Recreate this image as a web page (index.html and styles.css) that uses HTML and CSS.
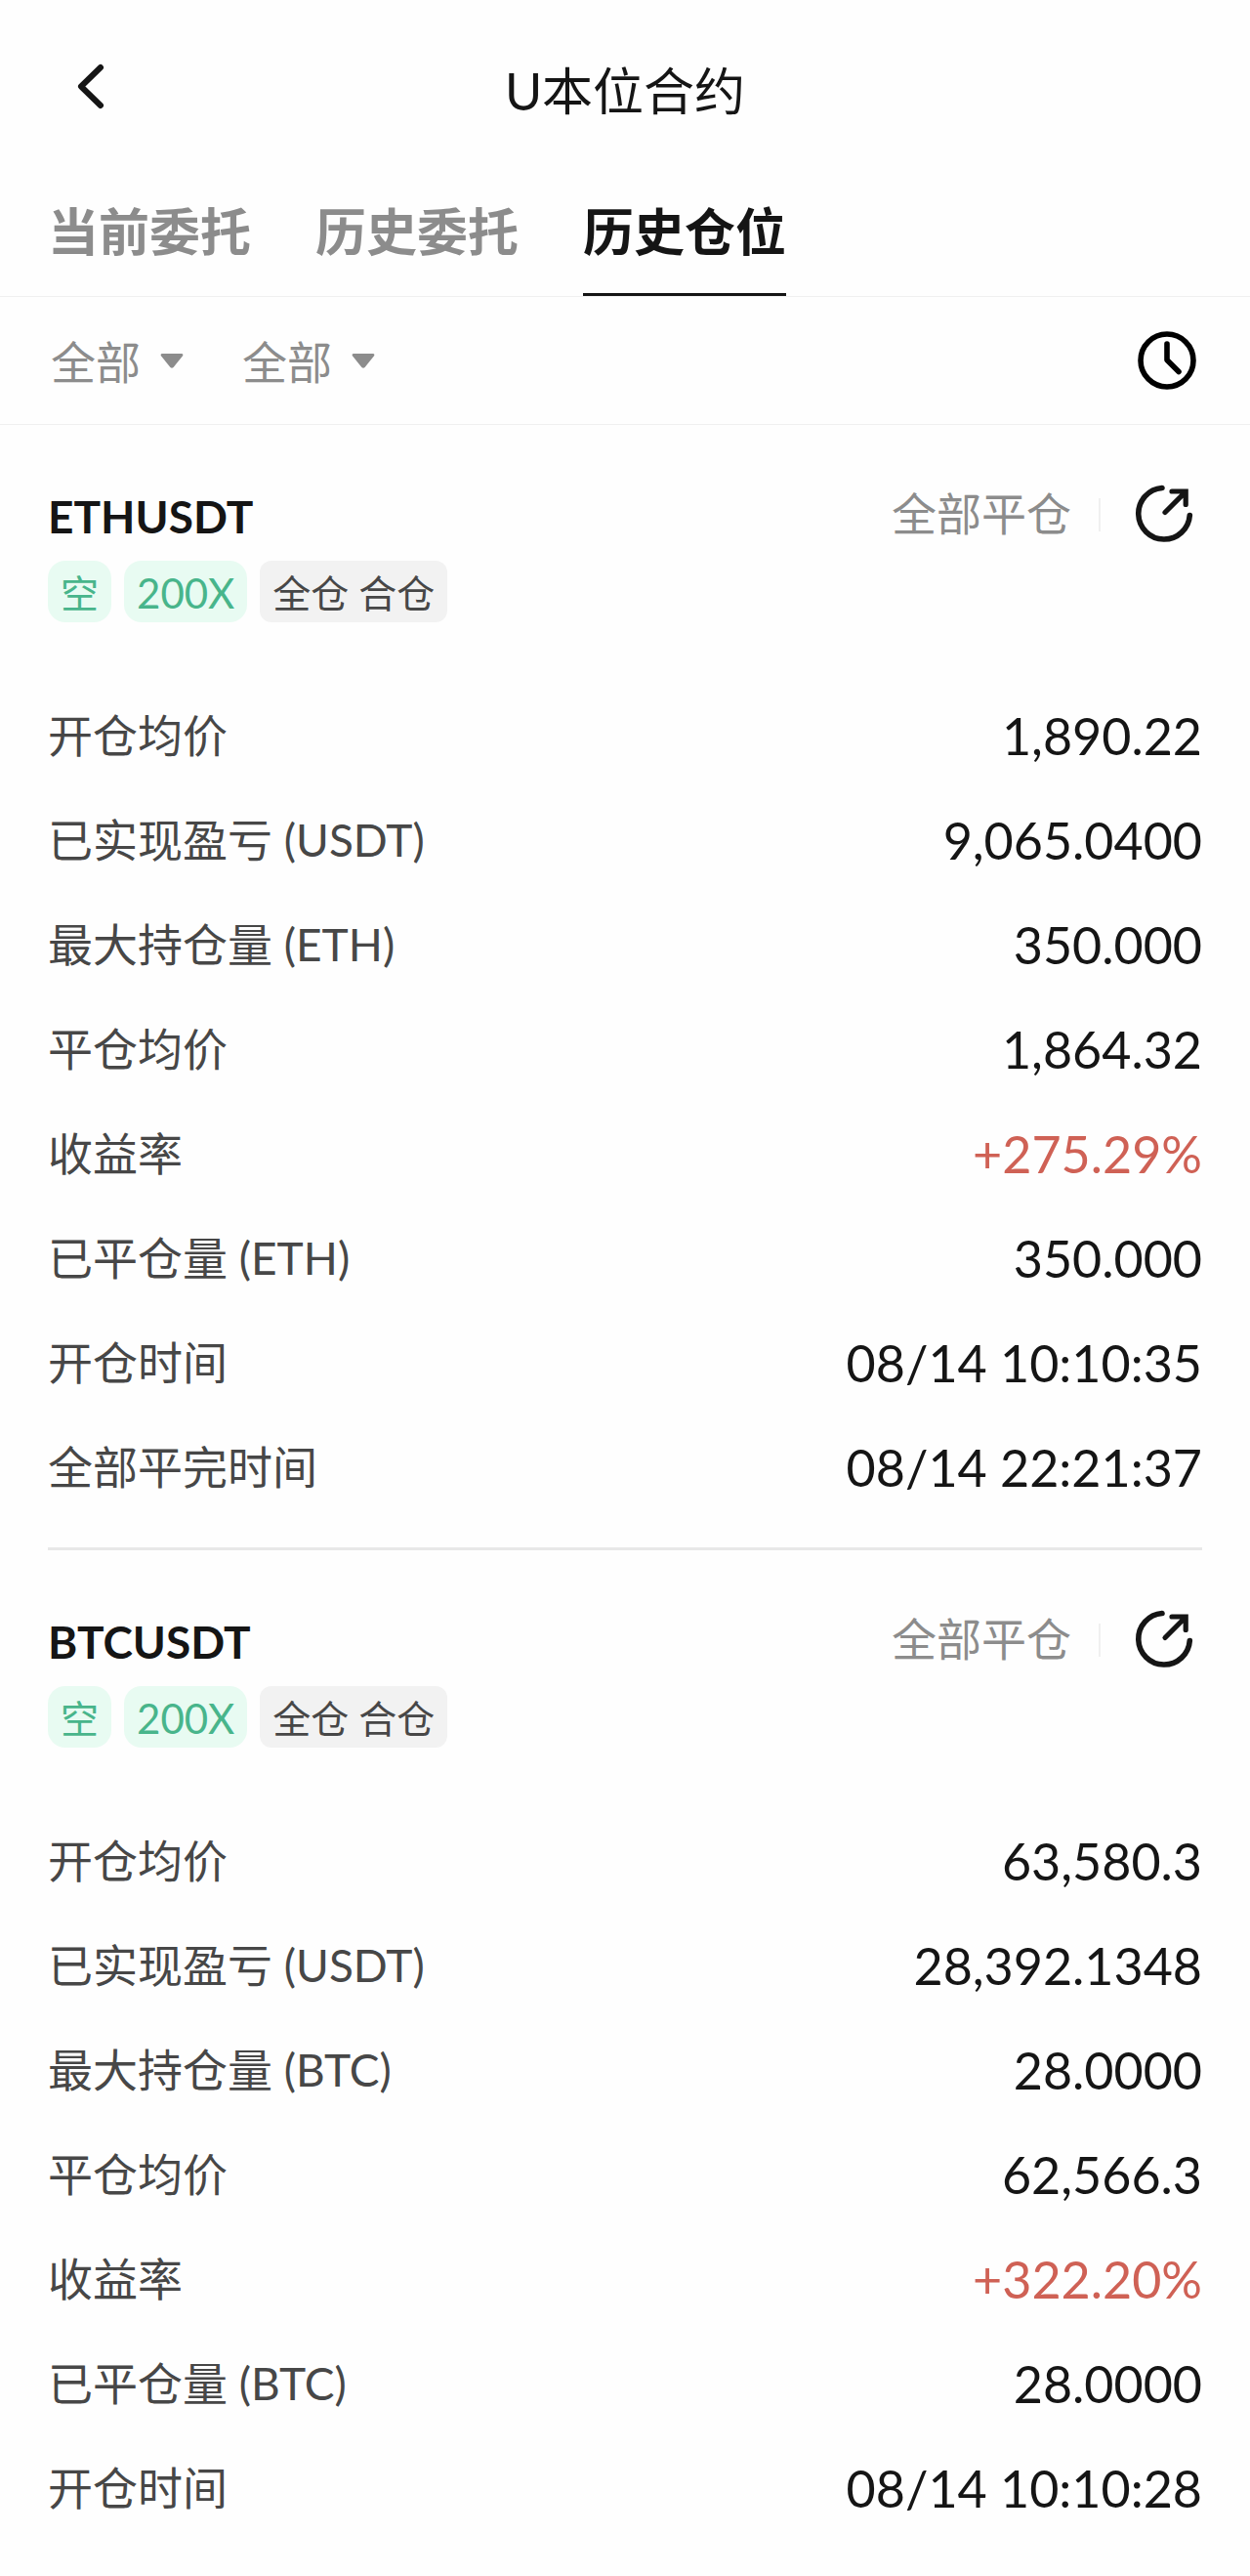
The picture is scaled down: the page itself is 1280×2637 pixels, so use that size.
FILE: index.html
```html
<!DOCTYPE html>
<html lang="zh-CN">
<head>
	<meta charset="UTF-8">
	<meta name="viewport" content="width=device-width, initial-scale=1">
	<title>U本位合约</title>
	<link rel="stylesheet" href="styles.css">
</head>
<body>
	<header class="topbar">
		<button class="icon_btn back" type="button" aria-label="返回">
			<svg width="72" height="72" viewBox="0 0 72 72"><path d="M51 17 L31 36.500 L51 56" fill="none" stroke="currentColor" stroke-width="6" stroke-linecap="round" stroke-linejoin="round"/></svg>
		</button>
		<h1>U本位合约</h1>
	</header>

	<nav class="tabs">
		<a href="#current">当前委托</a>
		<a href="#orders">历史委托</a>
		<a href="#positions" class="active" aria-current="page">历史仓位</a>
	</nav>

	<div class="filters">
		<div class="filter">
			<select aria-label="合约">
				<option>全部</option>
			</select>
			<svg width="24" height="15" viewBox="0 0 22 14"><path d="M1.500 0 H20.500 Q22.500 0.500 21 2.500 L12.500 13 Q11 14.500 9.500 13 L1 2.500 Q-0.500 0.500 1.500 0Z" fill="currentColor"/></svg>
		</div>
		<div class="filter">
			<select aria-label="状态">
				<option>全部</option>
			</select>
			<svg width="24" height="15" viewBox="0 0 22 14"><path d="M1.500 0 H20.500 Q22.500 0.500 21 2.500 L12.500 13 Q11 14.500 9.500 13 L1 2.500 Q-0.500 0.500 1.500 0Z" fill="currentColor"/></svg>
		</div>
		<button class="icon_btn clock" type="button" aria-label="时间">
			<svg width="72" height="72" viewBox="0 0 72 72" fill="none" stroke="currentColor" stroke-width="5.600" stroke-linecap="round" stroke-linejoin="round"><circle cx="36" cy="36" r="27"/><path d="M36 19 V35.500 L48 47.500"/></svg>
		</button>
	</div>

	<main id="positions">
		<section class="position">
			<div class="position_head">
				<h2>ETHUSDT</h2>
				<span class="status">全部平仓</span>
				<button class="icon_btn" type="button" aria-label="分享">
					<svg width="72" height="72" viewBox="0 0 72 72" fill="none" stroke="currentColor" stroke-linecap="round"><path d="M31 9.500 A26.300 26.300 0 1 0 59.300 37.500" stroke-width="5.600"/><path d="M34 34.500 L55 13.500 M41 13 H55.200 V26.500" stroke-width="5.200"/></svg>
				</button>
			</div>
			<div class="tags">
				<span class="tag short">空</span>
				<span class="tag short leverage">200X</span>
				<span class="tag">全仓 合仓</span>
			</div>
			<dl class="details">
				<div><dt>开仓均价</dt><dd>1,890.22</dd></div>
				<div><dt>已实现盈亏 (USDT)</dt><dd>9,065.0400</dd></div>
				<div><dt>最大持仓量 (ETH)</dt><dd>350.000</dd></div>
				<div><dt>平仓均价</dt><dd>1,864.32</dd></div>
				<div><dt>收益率</dt><dd class="profit">+275.29%</dd></div>
				<div><dt>已平仓量 (ETH)</dt><dd>350.000</dd></div>
				<div><dt>开仓时间</dt><dd>08/14 10:10:35</dd></div>
				<div><dt>全部平完时间</dt><dd>08/14 22:21:37</dd></div>
			</dl>
		</section>

		<section class="position">
			<div class="position_head">
				<h2>BTCUSDT</h2>
				<span class="status">全部平仓</span>
				<button class="icon_btn" type="button" aria-label="分享">
					<svg width="72" height="72" viewBox="0 0 72 72" fill="none" stroke="currentColor" stroke-linecap="round"><path d="M31 9.500 A26.300 26.300 0 1 0 59.300 37.500" stroke-width="5.600"/><path d="M34 34.500 L55 13.500 M41 13 H55.200 V26.500" stroke-width="5.200"/></svg>
				</button>
			</div>
			<div class="tags">
				<span class="tag short">空</span>
				<span class="tag short leverage">200X</span>
				<span class="tag">全仓 合仓</span>
			</div>
			<dl class="details">
				<div><dt>开仓均价</dt><dd>63,580.3</dd></div>
				<div><dt>已实现盈亏 (USDT)</dt><dd>28,392.1348</dd></div>
				<div><dt>最大持仓量 (BTC)</dt><dd>28.0000</dd></div>
				<div><dt>平仓均价</dt><dd>62,566.3</dd></div>
				<div><dt>收益率</dt><dd class="profit">+322.20%</dd></div>
				<div><dt>已平仓量 (BTC)</dt><dd>28.0000</dd></div>
				<div><dt>开仓时间</dt><dd>08/14 10:10:28</dd></div>
			</dl>
		</section>
	</main>
</body>
</html>
```

FILE: styles.css
```css
* {
	box-sizing: border-box;
}
body {
	margin: 0;
	background: #fefefe;
	color: #151515;
	font-family: Lato, "Noto Sans CJK SC", sans-serif;
}
h1, h2, dl, dd {
	margin: 0;
}
svg {
	display: block;
}
.icon_btn {
	width: 72px;
	height: 72px;
	padding: 0;
	border: none;
	background: none;
	color: inherit;
	cursor: pointer;
}

/* top bar */
.topbar {
	display: grid;
	grid-template-columns: 72px 1fr 72px;
	align-items: center;
	height: 176px;
	padding: 0 52px;
}
.topbar h1 {
	font-size: 52px;
	font-weight: 400;
	line-height: 72px;
	text-align: center;
	padding-top: 10px;
}

/* tabs */
.tabs {
	display: flex;
	gap: 66px;
	height: 128px;
	padding: 0 49px;
	border-bottom: 1px solid #f0f0f0;
}
.tabs a {
	padding-top: 25px;
	border-bottom: 3px solid transparent;
	color: #8c8c8c;
	font-size: 52px;
	font-weight: 700;
	line-height: 72px;
	text-decoration: none;
}
.tabs .active {
	border-color: #151515;
	color: #151515;
}

/* filters */
.filters {
	display: flex;
	align-items: center;
	gap: 60px;
	height: 131px;
	padding: 0 49px 0 52px;
	border-bottom: 1px solid #f0f0f0;
	color: #8c8c8c;
}
.filter {
	display: grid;
	align-items: center;
}
.filter select,
.filter svg {
	grid-area: 1 / 1;
}
.filter select {
	padding: 4px 44px 0 0;
	border: none;
	background: none;
	color: inherit;
	font-family: inherit;
	font-size: 46px;
	line-height: 64px;
	-webkit-appearance: none;
	appearance: none;
}
.filter svg {
	justify-self: end;
	pointer-events: none;
}
.clock {
	margin-left: auto;
	color: #000;
}

/* positions */
.position {
	margin: 0 49px;
	padding: 55px 0 29px;
}
.position + .position {
	border-top: 3px solid #e8e8e8;
}
.position_head {
	display: flex;
	align-items: center;
}
.position_head h2 {
	flex: 1;
	padding-top: 6px;
	font-size: 46px;
	font-weight: 700;
	line-height: 64px;
}
.status {
	color: #8c8c8c;
	font-size: 46px;
	line-height: 64px;
}
.position_head .icon_btn {
	margin-left: 62px;
}
.status::after {
	content: "";
	position: absolute;
	width: 2px;
	height: 34px;
	margin: 16px 0 0 28px;
	background: #f0f0f0;
}
.tags {
	display: flex;
	gap: 13px;
	margin-top: 12px;
}
.tag {
	padding: 4px 13px 0;
	border-radius: 12px;
	background: #f2f2f2;
	color: #474747;
	font-size: 39px;
	line-height: 59px;
}
.tag.short {
	border-radius: 18px;
	background: #e8fbf2;
	color: #48b58b;
}
.tag.leverage {
	font-size: 42px;
}

.details {
	margin-top: 62px;
}
.details div {
	display: flex;
	align-items: center;
	justify-content: space-between;
	height: 107px;
}
.details dt {
	color: #474747;
	font-size: 46px;
	line-height: 64px;
}
.details dd {
	font-size: 52px;
	line-height: 64px;
}
.details .profit {
	color: #cf6155;
}
```
